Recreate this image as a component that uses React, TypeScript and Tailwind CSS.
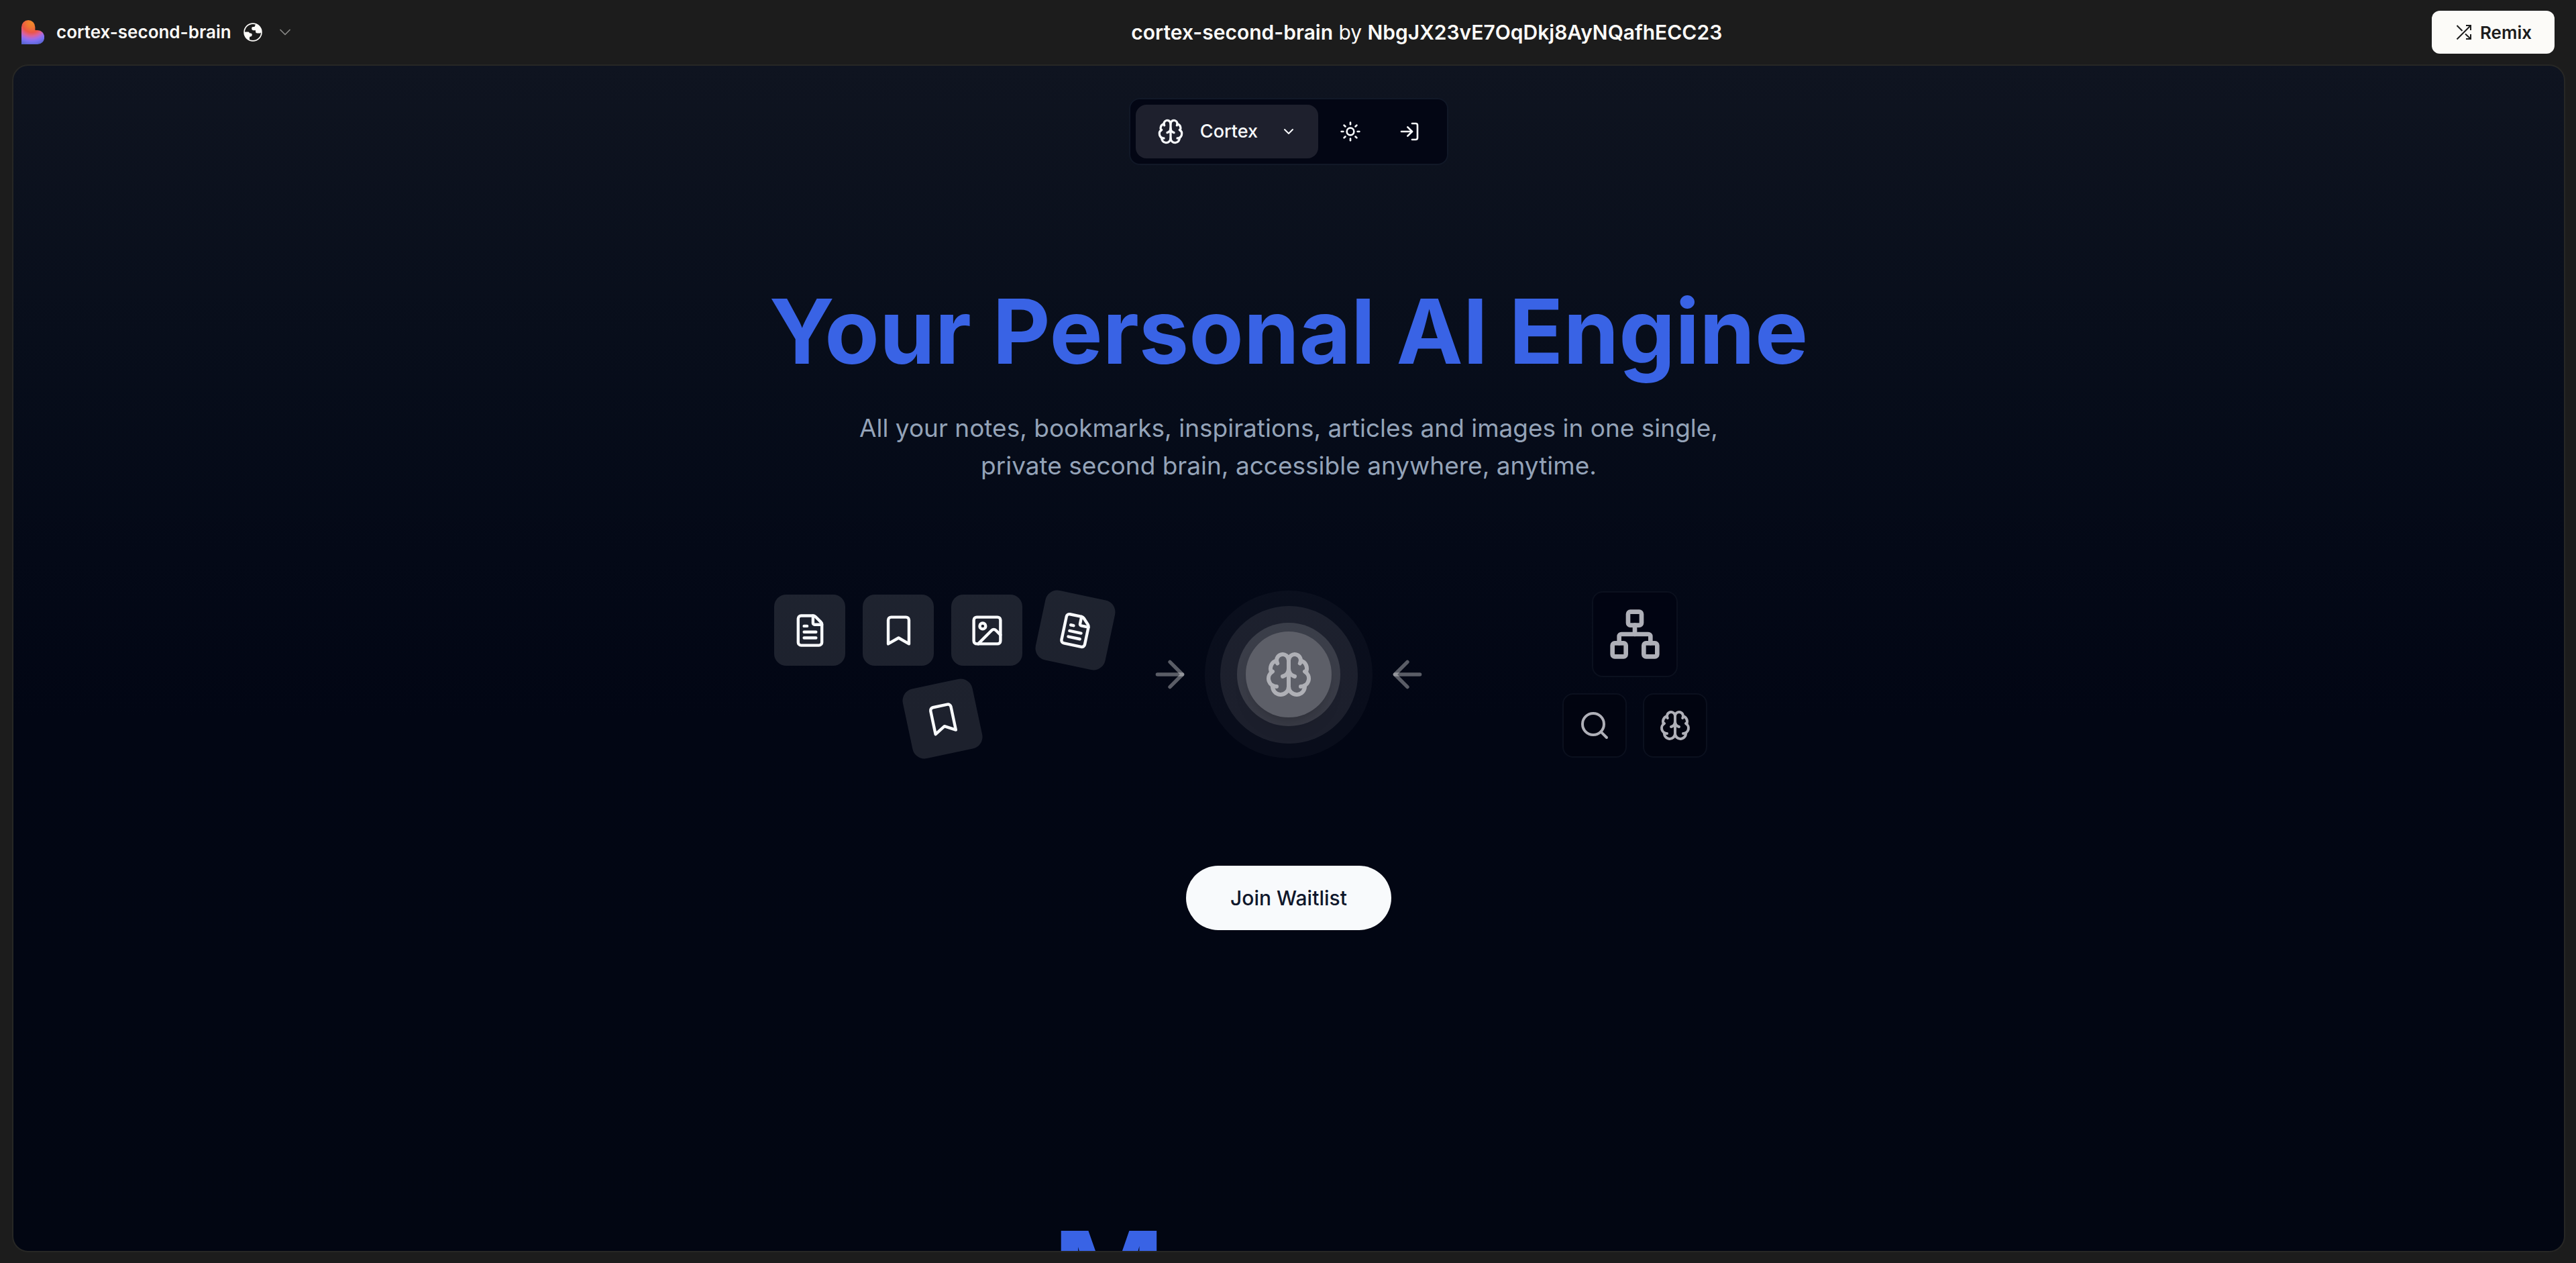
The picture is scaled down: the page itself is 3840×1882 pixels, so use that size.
import {
  ArrowLeft,
  ArrowRight,
  Bookmark,
  Brain,
  ChevronDown,
  FileText,
  Image as ImageIcon,
  LogIn,
  Network,
  Search,
  Sun,
} from "lucide-react";
import type { ReactNode } from "react";

function BrandLogo() {
  return (
    <svg viewBox="0 0 34 36" className="h-9 w-[34px]" aria-hidden="true">
      <defs>
        <radialGradient id="brand" gradientUnits="userSpaceOnUse" cx="15" cy="4" r="34">
          <stop offset="0" stopColor="#f08a2c" />
          <stop offset="0.2" stopColor="#ef7832" />
          <stop offset="0.42" stopColor="#ec5546" />
          <stop offset="0.58" stopColor="#d8629e" />
          <stop offset="0.7" stopColor="#a56be2" />
          <stop offset="0.82" stopColor="#7a70f2" />
          <stop offset="1" stopColor="#5563cc" />
        </radialGradient>
      </defs>
      <path
        d="M0 10.5A10.2 10.5 0 0 1 20.4 10.5V15H24A10.2 10.5 0 0 1 24 36H0Z"
        fill="url(#brand)"
      />
    </svg>
  );
}

function GlobeIcon() {
  return (
    <svg viewBox="0 0 28 28" className="size-7" aria-hidden="true">
      <circle cx="14" cy="14" r="12.9" fill="none" stroke="#fcfbf8" strokeWidth="1.7" />
      <path
        d="M18.5 1.500C24 3.500 27 8 26.800 13.500L25 15.500H20.500Q18.200 15.500 18 13.500V11.200H14.500Q12.200 11 12.200 9V7.500Q12.400 6 14 6H15.500Q17 6 17 4.500Z"
        fill="#fcfbf8"
      />
      <path d="M1 13.500H7.500L9.500 15.500H11Q12.800 15.800 12.800 17.500Q12.800 19.800 11 20.500H10Q9 20.800 9 22V25.500C4.500 23.500 1.500 20 1 13.500Z" fill="#fcfbf8" />
    </svg>
  );
}

function ShuffleIcon() {
  return (
    <svg viewBox="0 0 24 24" className="size-6" fill="none" stroke="#1c1c1c" strokeWidth="2" aria-hidden="true">
      <path d="M1.500 22.500L22 2M15 2H22V9M1.500 2L9.500 10M14 14.500L22 22M15 22H22V15" />
    </svg>
  );
}

function Tile({ children, tilt = "" }: { children: ReactNode; tilt?: string }) {
  return (
    <li className={`flex size-[106px] items-center justify-center rounded-[18px] bg-white/[0.11] text-slate-50 ${tilt}`}>
      {children}
    </li>
  );
}

export default function App() {
  return (
    <div className="flex h-screen flex-col bg-[#1c1c1c] font-[Inter,sans-serif] text-[#fcfbf8]">
      <header className="flex h-24 shrink-0 items-center px-8">
        <div className="flex flex-4 items-center">
          <button className="flex items-center" aria-label="Project menu">
            <BrandLogo />
            <span className="mx-[18px] text-[26px] leading-8 font-semibold">cortex-second-brain</span>
            <GlobeIcon />
            <ChevronDown className="ml-5 size-7 text-[#8a8a88]" strokeWidth={1.5} />
          </button>
        </div>
        <p className="text-[30px] leading-8 whitespace-nowrap">
          <strong className="font-semibold">cortex-second-brain</strong> by{" "}
          <strong className="font-semibold">NbgJX23vE7OqDkj8AyNQafhECC23</strong>
        </p>
        <div className="flex flex-3 justify-end">
          <button className="flex h-16 items-center gap-3 rounded-xl bg-[#fcfbf8] pr-[34px] pl-9 text-[26px] font-semibold text-[#1c1c1c]">
            <ShuffleIcon />
            Remix
          </button>
        </div>
      </header>

      <div className="mr-4 mb-4 ml-[18px] flex min-h-0 flex-1 flex-col overflow-hidden rounded-3xl border-2 border-[#272725] bg-linear-to-b from-[#0f1420] via-[#020614] via-55% to-[#020612]">
        <nav className="mx-auto mt-12 flex shrink-0 gap-2 rounded-2xl border-2 border-[#111827] bg-[#030614] p-2 pr-4 text-slate-50">
          <button className="flex h-20 items-center rounded-2xl bg-[#1e202d] px-8 text-[27px] font-medium">
            <Brain className="size-10" />
            <span className="mr-[34px] ml-6">Cortex</span>
            <ChevronDown className="size-6" />
          </button>
          <button className="flex size-20 items-center justify-center" aria-label="Toggle theme">
            <Sun className="size-8" />
          </button>
          <button className="flex size-20 items-center justify-center" aria-label="Sign in">
            <LogIn className="size-8" />
          </button>
        </nav>

        <main className="flex flex-col items-center">
          <h1 className="mt-44 text-center text-[133px] leading-[144px] font-bold text-[#3963e5]">
            Your Personal AI Engine
          </h1>
          <p className="mt-11 max-w-[1344px] text-center text-[37px] leading-14 text-[#94a3b8]">
            All your notes, bookmarks, inspirations, articles and images in one single, private second brain, accessible
            anywhere, anytime.
          </p>

          <section className="mt-[158px] grid grid-cols-[516px_516px_516px] items-center justify-items-center">
            <ul className="flex w-[516px] flex-wrap justify-center gap-[26px]">
              <Tile><FileText className="size-[53px]" /></Tile>
              <Tile><Bookmark className="size-[53px]" /></Tile>
              <Tile><ImageIcon className="size-[53px]" /></Tile>
              <Tile tilt="rotate-12"><FileText className="size-[53px]" /></Tile>
              <Tile tilt="-rotate-12"><Bookmark className="size-[53px]" /></Tile>
            </ul>
            <div className="flex items-center gap-5">
              <ArrowRight className="size-16 text-white/35" />
              <div className="flex size-[250px] items-center justify-center rounded-full bg-white/[0.03]">
                <div className="flex size-[205px] items-center justify-center rounded-full bg-white/[0.08]">
                  <div className="flex size-[154px] items-center justify-center rounded-full bg-white/[0.13]">
                    <div className="flex size-32 items-center justify-center rounded-full bg-[#5d5f68] shadow-xl">
                      <Brain className="size-18 text-[#afb0b6]" />
                    </div>
                  </div>
                </div>
              </div>
              <ArrowLeft className="size-16 text-white/35" />
            </div>
            <div className="flex flex-col items-center gap-6 text-[#afb0b8]">
              <div className="flex size-32 items-center justify-center rounded-2xl border-2 border-[#0b101e] bg-[#010412]">
                <Network className="size-20" />
              </div>
              <div className="flex gap-6">
                <div className="flex size-24 items-center justify-center rounded-2xl border-2 border-[#0b101e] bg-[#010410]">
                  <Search className="size-12" />
                </div>
                <div className="flex size-24 items-center justify-center rounded-2xl border-2 border-[#0b101e] bg-[#010410]">
                  <Brain className="size-12" />
                </div>
              </div>
            </div>
          </section>

          <button className="mt-40 h-24 rounded-full bg-slate-50 px-[66px] text-[30px] font-medium text-slate-900">
            Join Waitlist
          </button>

          <h2 className="mt-[418px] w-[702px] text-[178px] leading-[192px] font-bold text-[#3963e5]">M</h2>
        </main>
      </div>
    </div>
  );
}
